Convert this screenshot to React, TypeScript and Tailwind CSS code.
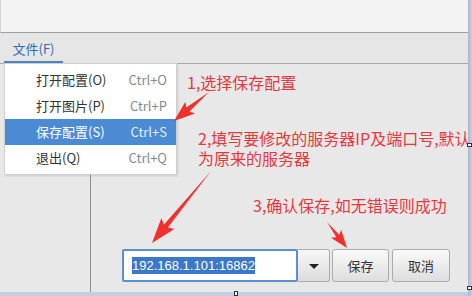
import React from "react";

const CJK = "font-['Microsoft_YaHei','Noto_Sans_CJK_SC',sans-serif]";

const MENU_ITEMS = [
  { label: "打开配置(O)", shortcut: "Ctrl+O" },
  { label: "打开图片(P)", shortcut: "Ctrl+P" },
  { label: "保存配置(S)", shortcut: "Ctrl+S", active: true },
  { label: "退出(Q)", shortcut: "Ctrl+Q" },
];

// Tapered annotation arrow: a point at the tail, widening to a swept head.
function arrowPoints(x0: number, y0: number, x1: number, y1: number, head: number, headW: number, neckW: number) {
  const dx = x1 - x0;
  const dy = y1 - y0;
  const len = Math.hypot(dx, dy);
  const ux = dx / len;
  const uy = dy / len;
  const nx = -uy;
  const ny = ux;
  const bx = x1 - ux * head;
  const by = y1 - uy * head;
  const sx = bx - ux * 3;
  const sy = by - uy * 3;
  const pts = [
    [x0, y0],
    [bx + (nx * neckW) / 2, by + (ny * neckW) / 2],
    [sx + (nx * headW) / 2, sy + (ny * headW) / 2],
    [x1, y1],
    [sx - (nx * headW) / 2, sy - (ny * headW) / 2],
    [bx - (nx * neckW) / 2, by - (ny * neckW) / 2],
  ];
  return pts.map((p) => `${p[0].toFixed(1)},${p[1].toFixed(1)}`).join(" ");
}

const ARROWS = [
  { from: [209, 92], to: [174, 121], head: 18, headW: 15, neckW: 5 },
  { from: [211, 171], to: [152, 243], head: 22, headW: 17, neckW: 5 },
  { from: [327, 222], to: [347, 248], head: 15, headW: 13, neckW: 4 },
];

export default function App() {
  return (
    <div className={`relative flex h-[296px] w-[472px] overflow-hidden bg-[#e8e8e8] ${CJK}`}>
      <div className="flex flex-1 flex-col">
        <div className="h-[33px] border-b border-l border-[#9e9e9e] border-l-[#d6d6d6] bg-[#f3f3f3]" />
        <div className="flex h-[31px] items-end border-b border-[#a9a9a9] bg-[#e6e6e6] pl-[4px]">
          <div className="flex h-full w-[59px] flex-col items-center justify-end border-b-2 border-[#4a86c8] pb-[2px] text-[13px] leading-[20px] text-[#2f6db5]">
            文件(F)
          </div>
        </div>
        <div className="flex flex-1">
          <div className="w-[91px] border-r border-[#8e8e8e]" />
          <div className="flex flex-1 flex-col justify-end pb-[10px] pl-[31px]">
            <div className="flex h-[33px] items-stretch">
              <div className="flex w-[176px] items-center rounded-[2px] border-2 border-[#5b8fd4] bg-white pl-[8px]">
                <span className="bg-[#3b78c8] font-['Liberation_Sans',sans-serif] text-[13px] leading-[17px] text-white">
                  192.168.1.101:16862
                </span>
              </div>
              <div className="flex w-[32px] items-center justify-center rounded-r-[3px] border border-l-0 border-[#acacac] bg-gradient-to-b from-[#f7f7f7] to-[#dcdcdc] pt-[2px]">
                <span className="h-0 w-0 border-x-[5px] border-t-[5px] border-x-transparent border-t-[#222]" />
              </div>
              <button className="ml-[2px] w-[57px] rounded-[3px] border border-[#acacac] bg-gradient-to-b from-[#fafafa] to-[#dedede] text-[13px] text-[#333]">
                保存
              </button>
              <button className="ml-[3px] w-[58px] rounded-[3px] border border-[#acacac] bg-gradient-to-b from-[#fafafa] to-[#dedede] text-[13px] text-[#333]">
                取消
              </button>
            </div>
          </div>
        </div>
        <div className="h-[4px] bg-[#c5cde0]" />
      </div>
      <div className="w-[4px] bg-gradient-to-r from-[#aab4cf] to-[#c9d0e3]" />

      {/* dropdown menu */}
      <div className="absolute left-[4px] top-[63px] w-[173px] border border-[#d0d0d0] bg-white py-[3px] shadow-[1px_1px_2px_rgba(0,0,0,0.12)]">
        {MENU_ITEMS.map((item) => (
          <div
            key={item.label}
            className={`flex h-[26px] items-center justify-between pl-[31px] pr-[9px] text-[13px] ${
              item.active ? "bg-[#4b8bd4] text-white" : "text-[#333]"
            }`}
          >
            <span>{item.label}</span>
            <span className={item.active ? "text-[#e6eefa]" : "text-[#8a8a8a]"}>{item.shortcut}</span>
          </div>
        ))}
      </div>

      {/* annotations */}
      <div className="absolute left-[187px] top-[72px] whitespace-nowrap text-[16px] leading-[20px] text-[#e8383d]">
        1,选择保存配置
      </div>
      <div className="absolute left-[198px] top-[128px] whitespace-nowrap text-[16px] leading-[20px] text-[#e8383d]">
        2,填写要修改的服务器IP及端口号,默认
        <br />
        为原来的服务器
      </div>
      <div className="absolute left-[253px] top-[195px] whitespace-nowrap text-[16px] leading-[20px] text-[#e8383d]">
        3,确认保存,如无错误则成功
      </div>
      <svg className="pointer-events-none absolute inset-0" width="472" height="296">
        {ARROWS.map((a, i) => (
          <polygon
            key={i}
            points={arrowPoints(a.from[0], a.from[1], a.to[0], a.to[1], a.head, a.headW, a.neckW)}
            fill="#f4302c"
          />
        ))}
      </svg>

      {/* resize handles */}
      <span className="absolute left-[234px] top-[291px] h-[5px] w-[4px] border border-[#333] bg-white" />
      <span className="absolute left-[467px] top-[143px] h-[4px] w-[5px] border border-[#333] bg-white" />
      <span className="absolute left-[467px] top-[286px] h-[4px] w-[5px] border border-[#333] bg-white" />
    </div>
  );
}
